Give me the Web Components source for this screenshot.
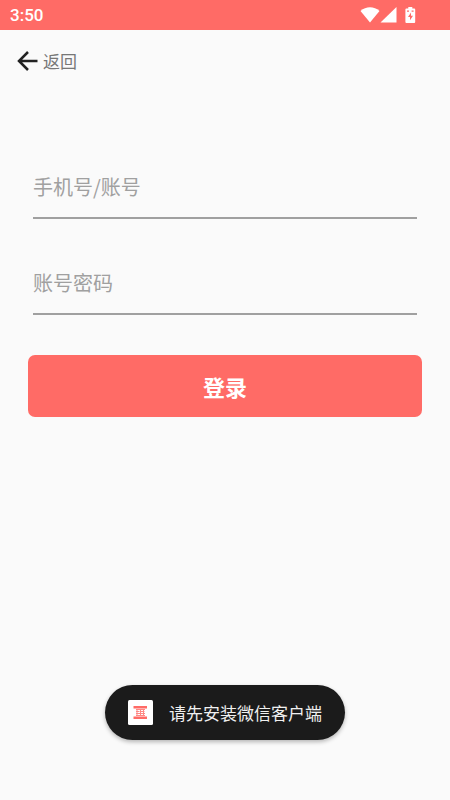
<!DOCTYPE html>
<html lang="zh-CN">
<head>
<meta charset="utf-8">
<meta name="viewport" content="width=device-width, initial-scale=1">
<title>登录</title>
<style>
  html, body { margin: 0; height: 100%; }
  body { background: #fafafa; font-family: "Noto Sans CJK SC", sans-serif; }
</style>
</head>
<body>
<login-app></login-app>
<script>
const define = (name, html) => {
  const template = document.createElement('template');
  template.innerHTML = html;
  customElements.define(name, class extends HTMLElement {
    constructor() {
      super();
      this.attachShadow({ mode: 'open' }).append(template.content.cloneNode(true));
    }
  });
};

define('status-bar', `
  <style>
    :host { display: flex; align-items: center; justify-content: space-between; height: 30px; padding: 0 34px 0 10px; background: #ff6b66; color: #fff; box-sizing: border-box; }
    time { font-family: Roboto, sans-serif; font-size: 17px; line-height: 20px; font-weight: 500; }
    .icons { display: flex; align-items: center; }
    .icons svg { display: block; fill: currentColor; }
    .battery { margin-left: 8px; }
  </style>
  <time>3:50</time>
  <div class="icons">
    <svg width="20" height="16" viewBox="0 0 20 16" aria-hidden="true"><path d="M.5 4C6-1 14-1 19.500 4L10 15.500z"/></svg>
    <svg width="17" height="16" viewBox="0 0 17 16" aria-hidden="true"><path d="M16.500 0v15.500H.5z"/></svg>
    <svg class="battery" width="11" height="16" viewBox="0 0 11 16" aria-hidden="true"><path fill-rule="evenodd" d="M3.300 0h4v1.500H9.200q1 0 1 1V15q0 1-1 1H1.400q-1 0-1-1V2.500q0-1 1-1H3.300zM2 3.400v1.400h2V3.400zm4.600 0v1.400h2V3.400zM6 5.600 3 10h2v3.300l3-4.500H6z"/></svg>
  </div>`);

define('back-bar', `
  <style>
    :host { display: flex; align-items: center; height: 62px; padding: 0 17px; box-sizing: border-box; }
    button { display: flex; align-items: center; gap: 5px; padding: 0; border: 0; background: none; color: #777; font: inherit; font-size: 17px; line-height: 26px; cursor: pointer; }
    svg { display: block; fill: none; stroke: #222; stroke-width: 2.500; }
  </style>
  <button type="button">
    <svg width="21" height="20" viewBox="0 0 21 20" aria-hidden="true"><path d="M20.500 10H2.500M11 1 2 10l9 9"/></svg>
    <span><slot></slot></span>
  </button>`);

class TextField extends HTMLElement {
  constructor() {
    super();
    this.attachShadow({ mode: 'open' }).innerHTML = `
      <style>
        :host { display: block; }
        input { display: block; width: 100%; height: 64px; box-sizing: border-box; margin: 0; padding: 1px 0 0; border: 0; border-bottom: 2px solid #a0a0a0; border-radius: 0; outline: 0; background: none; color: #333; font: inherit; font-size: 20px; }
        input::placeholder { color: #a0a0a0; opacity: 1; }
        input:focus { border-color: #ff6b66; }
      </style>
      <input>`;
  }
  connectedCallback() {
    const input = this.shadowRoot.querySelector('input');
    const label = this.getAttribute('label');
    input.type = this.getAttribute('type') || 'text';
    input.placeholder = label;
    input.setAttribute('aria-label', label);
  }
}
customElements.define('text-field', TextField);

define('primary-button', `
  <style>
    :host { display: block; }
    button { display: block; width: 100%; padding: 15px 0; border: 0; border-radius: 7px; background: #ff6b66; color: #fff; font: inherit; font-size: 22px; line-height: 32px; font-weight: 700; cursor: pointer; }
  </style>
  <button type="submit"><slot></slot></button>`);

define('app-toast', `
  <style>
    :host { display: flex; align-items: center; gap: 16px; height: 55px; padding: 0 23px; box-sizing: border-box; border-radius: 28px; background: #1b1b1b; color: #f0f0f0; font-size: 17px; line-height: 26px; white-space: nowrap; box-shadow: 0 2px 4px rgba(0,0,0,.28); }
    svg { display: block; flex: none; }
  </style>
  <svg width="25" height="25" viewBox="0 0 25 25" aria-hidden="true">
    <rect width="25" height="25" rx="1.500" fill="#fff"/>
    <path d="M5.500 6h13.500v2.500H5.500zM5.500 16.500h13.500V19H5.500z" fill="#ff6b66"/>
    <path d="M8 9.500h4M13 9.500h4M8 11.500h3.500M13 11.500h3.500M8 13.500h4M13 13.500h4M8 15.500h9M9 9v7M12.500 9v7M15.500 9v7" stroke="#ff6b66" stroke-width="1" opacity=".8"/>
  </svg>
  <span role="status"><slot></slot></span>`);

define('login-app', `
  <style>
    :host { display: flex; flex-direction: column; min-height: 100%; background: #fafafa; }
    form { display: flex; flex-direction: column; gap: 32px; padding: 63px 28px 0; }
    text-field { margin: 0 5px; }
    primary-button { margin-top: 8px; }
    footer { display: flex; justify-content: center; margin-top: auto; padding: 40px 0 60px; }
  </style>
  <status-bar></status-bar>
  <back-bar>返回</back-bar>
  <form onsubmit="return false">
    <text-field label="手机号/账号"></text-field>
    <text-field label="账号密码" type="password"></text-field>
    <primary-button>登录</primary-button>
  </form>
  <footer><app-toast>请先安装微信客户端</app-toast></footer>`);
</script>
</body>
</html>
